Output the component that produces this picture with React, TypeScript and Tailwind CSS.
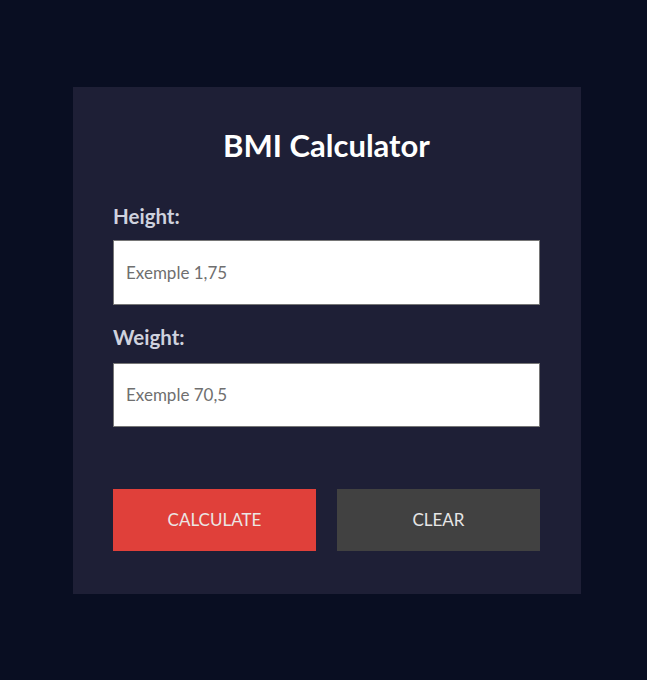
import React from "react";

export default function App() {
  return (
    <div
      className="w-full h-screen bg-[#090e22] flex items-center pl-[73px]"
      style={{ fontFamily: "Lato, 'Noto Sans', sans-serif" }}
    >
      <div className="w-[508px] bg-[#1e1f36] pt-10 pb-[43px] pl-10 pr-[41px] flex flex-col">
        <h1 className="text-[31px] leading-[36px] font-bold text-white text-center">
          BMI Calculator
        </h1>
        <label className="mt-[41px] text-[20.5px] leading-[24px] font-bold text-[#cfd2de]">
          Height:
        </label>
        <input
          type="text"
          placeholder="Exemple 1,75"
          className="mt-3 h-[65px] w-full bg-white border border-[#767676] pl-3 text-[17px] text-[#333] placeholder:text-[#6f6f6f] outline-none"
          style={{ fontFamily: "Lato, 'Noto Sans', sans-serif" }}
        />
        <label className="mt-5 text-[20.5px] leading-[24px] font-bold text-[#cfd2de]">
          Weight:
        </label>
        <input
          type="text"
          placeholder="Exemple 70,5"
          className="mt-[14px] h-[64px] w-full bg-white border border-[#767676] pl-3 text-[17px] text-[#333] placeholder:text-[#6f6f6f] outline-none"
          style={{ fontFamily: "Lato, 'Noto Sans', sans-serif" }}
        />
        <div className="mt-[62px] flex gap-[21px]">
          <button className="w-[203px] h-[62px] bg-[#e0403a] text-[#ebe6e4] text-[17px] uppercase">
            Calculate
          </button>
          <button className="w-[203px] h-[62px] bg-[#414141] text-[#e6e6e6] text-[17px] uppercase">
            Clear
          </button>
        </div>
      </div>
    </div>
  );
}
